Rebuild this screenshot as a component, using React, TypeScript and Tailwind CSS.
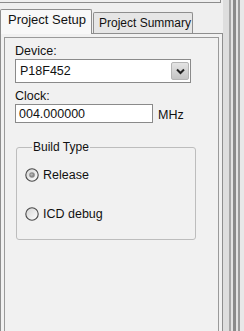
import React from "react";

function Radio({ checked }: { checked?: boolean }) {
  return (
    <svg width="14" height="14" viewBox="0 0 14 14" className="shrink-0">
      <defs>
        <linearGradient id={checked ? "rg1" : "rg2"} x1="0" y1="0" x2="1" y2="1">
          <stop offset="0" stopColor="#d4d4d4" />
          <stop offset="1" stopColor="#ffffff" />
        </linearGradient>
      </defs>
      <circle cx="7" cy="7" r="6.2" fill={`url(#${checked ? "rg1" : "rg2"})`} stroke="#4a4a4a" strokeWidth="1.1" />
      {checked && <circle cx="7" cy="7" r="2.8" fill="#8a8a8a" />}
      {checked && <circle cx="6.6" cy="6.6" r="1.2" fill="#b5b5b5" />}
    </svg>
  );
}

export default function App() {
  return (
    <div
      className="w-[244px] h-[331px] bg-[#efefef] flex overflow-hidden text-[12px] leading-[14px] text-[#111]"
      style={{ fontFamily: '"Liberation Sans", Arial, sans-serif' }}
    >
      {/* left pane */}
      <div className="w-[223px] flex flex-col">
        <div className="h-[3px] w-[221px] border-b border-r border-[#8c8c8c]" />
        {/* tab strip */}
        <div className="h-[30px] flex items-end">
          <div className="relative z-10 -mb-px h-[25px] w-[92px] border-l border-t border-r border-[#8e8e8e] rounded-t-[2px] bg-[#f8f8f8] pl-[7px] pt-[3px] whitespace-nowrap text-[13px]">
            Project Setup
          </div>
          <div className="ml-[1px] h-[21px] w-[100px] border-l border-t border-r border-[#8e8e8e] rounded-t-[2px] bg-[#e6e6e6] pl-[5px] pt-[3px] whitespace-nowrap">
            Project Summary
          </div>
        </div>
        {/* tab page */}
        <div className="flex-1 flex flex-col border-l border-t border-r border-[#8e8e8e] bg-[#f1f1f1] pl-[3px] pr-[3px] pt-[3px]">
          <div className="flex-1 border-l border-t border-r border-[#9a9a9a] pl-[10px] pt-[6px]">
            <div className="text-[12.5px]">Device:</div>
            <div className="mt-[1px] w-[176px] h-[24px] border border-[#8a8a8a] bg-white flex items-center justify-between pl-[4px] pr-[1px]">
              <span className="text-[12.5px]">P18F452</span>
              <div className="w-[18px] h-[18px] rounded-[2px] border border-[#b4b4b4] bg-gradient-to-b from-[#e4e4e4] to-[#c4c4c4] flex items-center justify-center">
                <svg width="9" height="7" viewBox="0 0 9 7">
                  <path d="M1 1.5 L4.5 5 L8 1.5" fill="none" stroke="#222" strokeWidth="2" />
                </svg>
              </div>
            </div>
            <div className="mt-[6px] text-[12.5px]">Clock:</div>
            <div className="mt-[1px] flex items-center">
              <div className="w-[138px] h-[19px] border border-[#8a8a8a] bg-white pl-[3px] flex items-center">
                <span className="text-[12.5px]">004.000000</span>
              </div>
              <span className="ml-[5px] mt-[2px] text-[12.5px]">MHz</span>
            </div>
            <fieldset className="mt-[17px] ml-[1px] w-[180px] border border-[#bdbdbd] rounded-[3px] pl-[8px] pb-[18px]">
              <legend className="ml-[7px] px-[1px] leading-[14px]">Build Type</legend>
              <div className="mt-[14px] flex items-center gap-[4px] h-[14px]">
                <Radio checked />
                <span className="text-[12.5px]">Release</span>
              </div>
              <div className="mt-[25px] flex items-center gap-[4px] h-[14px]">
                <Radio />
                <span className="text-[12.5px]">ICD debug</span>
              </div>
            </fieldset>
          </div>
        </div>
      </div>
      {/* right splitter stripes */}
      <div className="flex-1 flex">
        <div className="w-[6px] bg-[#dedede]" />
        <div className="w-[2px] bg-[#a6a6a6]" />
        <div className="w-[2px] bg-[#e2e2e2]" />
        <div className="w-[3px] bg-[#8a8a8a]" />
        <div className="w-[2px] bg-[#e2e2e2]" />
        <div className="w-[2px] bg-[#999999]" />
        <div className="flex-1 bg-[#e8e8e8]" />
      </div>
    </div>
  );
}
